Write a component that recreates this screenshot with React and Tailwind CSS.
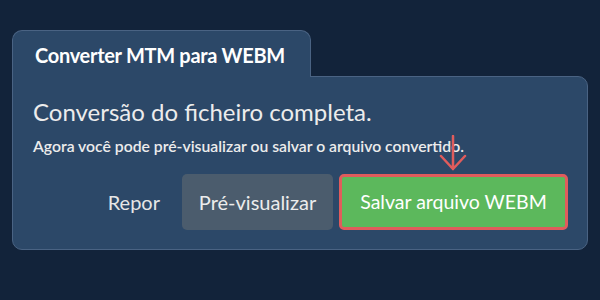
export default function App() {
  return (
    <div
      className="w-[600px] h-[300px] bg-[#12233a] pt-[30px] px-[12px]"
      style={{ fontFamily: "Lato, 'Open Sans', sans-serif" }}
    >
      <div className="relative z-10 -mb-px w-[299px] h-[47px] rounded-t-[10px] border border-b-0 border-[#4a6383] bg-[#2c4868] pl-[22px] pt-[10px]">
        <span className="text-[20px] leading-[28px] font-bold text-white tracking-[-0.3px]">
          Converter MTM para WEBM
        </span>
      </div>
      <div className="relative h-[174px] rounded-b-[10px] rounded-tr-[10px] border border-[#4a6383] bg-[#2c4868] pl-[20px] pr-[19px] pt-[21px]">
        <h1 className="text-[24px] leading-[28px] text-[#ececec]">Conversão do ficheiro completa.</h1>
        <p className="mt-[10px] text-[15.75px] leading-[20px] font-semibold text-[#ececec]">
          Agora você pode pré-visualizar ou salvar o arquivo convertido.
        </p>
        <div className="mt-[18px] flex items-center justify-end gap-[6px]">
          <button className="mr-[16px] text-[20px] text-[#e6e6e6]">Repor</button>
          <button className="w-[151px] h-[56px] rounded-[5px] bg-[#4b5c6d] text-[20px] text-[#ececec]">
            Pré-visualizar
          </button>
          <button className="w-[229px] h-[56px] rounded-[5px] border-[3px] border-[#e05c5c] bg-[#5cb85c] text-[19.5px] text-white">
            Salvar arquivo WEBM
          </button>
        </div>
        <svg
          className="absolute left-[426px] top-[58px]"
          width="28"
          height="38"
          viewBox="0 0 28 38"
          fill="none"
          stroke="#e05c5c"
          strokeWidth="2.5"
          strokeLinecap="round"
        >
          <path d="M14 1 V34 M2 21 L14 34 L26 21" />
        </svg>
      </div>
    </div>
  );
}
